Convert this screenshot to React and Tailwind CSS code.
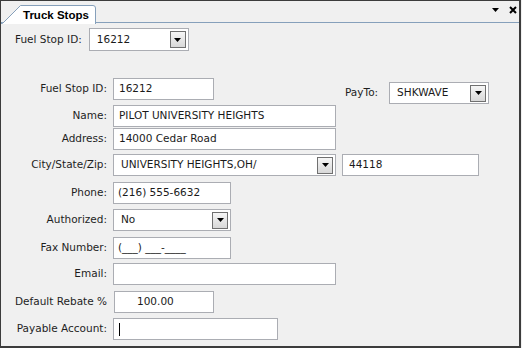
import React from 'react';

const font = { fontFamily: '"DejaVu Sans", Tahoma, sans-serif' };

const DropButton = () => (
  <div className="w-[16px] h-[17px] border border-[#707070] bg-gradient-to-b from-[#f6f6f6] to-[#d8d8d8] flex items-center justify-center shrink-0">
    <svg width="7" height="4" viewBox="0 0 7 4">
      <path d="M0 0h7L3.5 4z" fill="#000" />
    </svg>
  </div>
);

const TextBox = ({ width, value, className = '', pad = 'pl-[5px]', children }) => (
  <div
    className={`h-[22px] border border-[#abadb3] bg-white flex items-center text-[#1a1a1a] ${pad} ${className}`}
    style={{ width }}
  >
    {value}
    {children}
  </div>
);

const SelectBox = ({ width, value, className = '' }) => (
  <div
    className={`h-[22px] border border-[#abadb3] bg-white flex items-center justify-between pl-[7px] pr-[2px] text-[#1a1a1a] ${className}`}
    style={{ width }}
  >
    <span>{value}</span>
    <DropButton />
  </div>
);

const Row = ({ label, mt, children }) => (
  <div className="flex items-center h-[22px]" style={{ marginTop: mt }}>
    <div className="w-[107px] pr-[1px] text-right text-[#1e1e1e] whitespace-nowrap">{label}</div>
    <div className="ml-[5px] flex items-center">{children}</div>
  </div>
);

export default function App() {
  return (
    <div className="w-[522px] h-[348px] bg-[#f0f0f0] text-[10.5px] overflow-hidden" style={font}>
      <div className="w-[521px] h-[348px] border-r-2 border-b-2 border-l border-[#3c3c3c] flex flex-col">
        {/* tab strip */}
        <div className="relative h-[23px] shrink-0 border-t border-[#3c3c3c]">
          <div className="absolute left-0 right-0 bottom-0 h-[1px] bg-[#86a0bb]" />
          <div className="absolute left-0 top-[2px] w-[97px] h-[21px]">
            <svg width="97" height="21" viewBox="0 0 97 21" className="absolute inset-0">
              <path d="M1 20.5 L19.5 2.5 L92 2.5 Q94.5 2.5 94.5 5 L94.5 21 L1 21 Z" fill="#ffffff" />
              <path d="M-1 20.5 L1.5 20.5 L19.5 2.5 L92 2.5 Q94.5 2.5 94.5 5 L94.5 21" fill="none" stroke="#86a0bb" strokeWidth="1" />
            </svg>
            <div
              className="absolute left-[22px] top-[4px] font-bold text-[11.5px] text-black"
              style={{ fontFamily: '"Liberation Sans", Tahoma, sans-serif' }}
            >
              Truck Stops
            </div>
          </div>
          <div className="absolute right-[2px] top-[5px] flex items-center gap-[10px]">
            <svg width="7" height="4" viewBox="0 0 7 4">
              <path d="M0 0h7L3.5 4z" fill="#000" />
            </svg>
            <svg width="8" height="8" viewBox="0 0 8 8">
              <path d="M1 1L7 7M7 1L1 7" stroke="#000" strokeWidth="2" />
            </svg>
          </div>
        </div>

        {/* top selector */}
        <div className="flex items-center mt-[5px] ml-[14px]">
          <span className="text-[#1e1e1e]">Fuel Stop ID:</span>
          <SelectBox width={100} value="16212" className="ml-[7px] h-[23px]" />
        </div>

        {/* form */}
        <div className="flex flex-col mt-[27px]">
          <div className="flex items-start h-[22px]">
            <Row label="Fuel Stop ID:" mt={0}>
              <TextBox width={101} value="16212" />
            </Row>
            <div className="flex items-center ml-[131px] mt-[4px]">
              <span className="text-[#1e1e1e]">PayTo:</span>
              <SelectBox width={100} value="SHKWAVE" className="ml-[11px]" />
            </div>
          </div>
          <Row label="Name:" mt={5}>
            <TextBox width={223} value="PILOT UNIVERSITY HEIGHTS" />
          </Row>
          <Row label="Address:" mt={1}>
            <TextBox width={223} value="14000 Cedar Road" />
          </Row>
          <Row label="City/State/Zip:" mt={4}>
            <SelectBox width={223} value="UNIVERSITY HEIGHTS,OH/" />
            <TextBox width={137} value="44118" className="ml-[6px]" pad="pl-[6px]" />
          </Row>
          <Row label="Phone:" mt={6}>
            <TextBox width={118} value="(216) 555-6632" pad="pl-[4px]" />
          </Row>
          <Row label="Authorized:" mt={5}>
            <SelectBox width={118} value="No" className="pl-[4px]" />
          </Row>
          <Row label="Fax Number:" mt={6}>
            <TextBox width={118} value="(___) ___-____" pad="pl-[4px]" />
          </Row>
          <Row label="Email:" mt={4}>
            <TextBox width={223} value="" />
          </Row>
          <Row label="Default Rebate %" mt={6}>
            <TextBox width={100} value="100.00" pad="pl-[22px]" className="ml-[1px]" />
          </Row>
          <Row label="Payable Account:" mt={5}>
            <TextBox width={165} pad="pl-[5px]">
              <div className="w-[1px] h-[13px] bg-black" />
            </TextBox>
          </Row>
        </div>
      </div>
    </div>
  );
}
